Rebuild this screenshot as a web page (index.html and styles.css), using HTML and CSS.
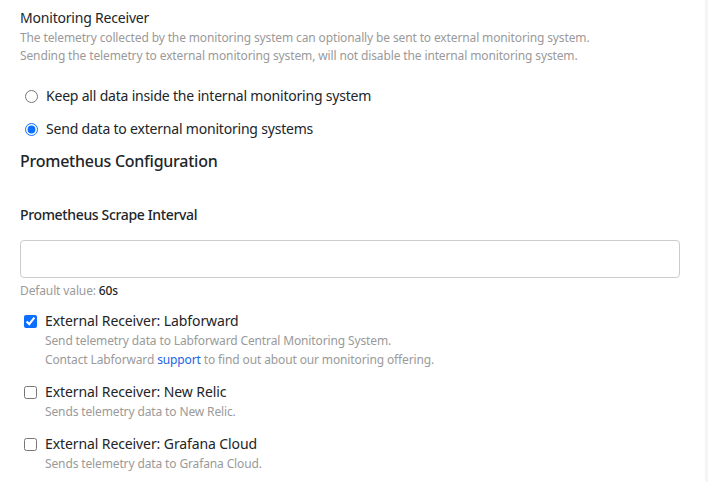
FILE: index.html
```html
<!DOCTYPE html>
<html lang="en">
<head>
<meta charset="utf-8">
<title>Monitoring Receiver</title>
<link rel="stylesheet" href="styles.css">
</head>
<body>
<div class="page">
  <main class="main">
    <section class="receiver">
      <h2 class="title">Monitoring Receiver</h2>
      <p class="desc">The telemetry collected by the monitoring system can optionally be sent to external monitoring system.<br>Sending the telemetry to external monitoring system, will not disable the internal monitoring system.</p>
      <div class="radios">
        <label class="radio-row"><input type="radio" name="mode"> <span>Keep all data inside the internal monitoring system</span></label>
        <label class="radio-row"><input type="radio" name="mode" checked> <span>Send data to external monitoring systems</span></label>
      </div>
    </section>
    <h3 class="heading">Prometheus Configuration</h3>
    <div class="field">
      <label class="field-label" for="scrape">Prometheus Scrape Interval</label>
      <input class="text-input" id="scrape" type="text">
      <div class="hint">Default value: <strong>60s</strong></div>
    </div>
    <div class="checks">
      <div class="check">
        <label class="check-row"><input type="checkbox" checked> <span>External Receiver: Labforward</span></label>
        <p class="check-desc">Send telemetry data to Labforward Central Monitoring System.<br>Contact Labforward <a href="#">support</a> to find out about our monitoring offering.</p>
      </div>
      <div class="check">
        <label class="check-row"><input type="checkbox"> <span>External Receiver: New Relic</span></label>
        <p class="check-desc">Sends telemetry data to New Relic.</p>
      </div>
      <div class="check">
        <label class="check-row"><input type="checkbox"> <span>External Receiver: Grafana Cloud</span></label>
        <p class="check-desc">Sends telemetry data to Grafana Cloud.</p>
      </div>
    </div>
  </main>
  <aside class="edge"></aside>
</div>
</body>
</html>
```

FILE: styles.css
```css
* { box-sizing: border-box; }
html, body { margin: 0; height: 100%; }
body {
  font-family: "Noto Sans", "DejaVu Sans", sans-serif;
  color: #212529;
  background: #fff;
}
.page { display: flex; min-height: 100%; }
.main { flex: 1; padding: 8px 25px 0 20px; }
.edge { width: 3px; background: #f3f6f5; }

.title { margin: 0 0 1px; font-size: 14px; line-height: 20px; font-weight: 400; letter-spacing: -0.2px; }
.desc { margin: 0; font-size: 12px; line-height: 18px; color: #9a9a9a; letter-spacing: -0.13px; }

.radios { display: flex; flex-direction: column; gap: 9px; margin-top: 19px; padding-left: 5px; }
.radio-row { display: flex; align-items: center; gap: 8px; font-size: 14px; line-height: 24px; height: 24px; letter-spacing: -0.2px; }
.radio-row input { margin: 0; width: 13px; height: 13px; accent-color: #0b6efd; }

.heading { margin: 8px 0 0; font-size: 16px; line-height: 24px; font-weight: 500; letter-spacing: -0.25px; }

.field { margin-top: 31px; display: flex; flex-direction: column; }
.field-label { font-size: 14px; line-height: 22px; font-weight: 500; letter-spacing: -0.35px; }
.text-input { margin-top: 14px; height: 38px; width: 100%; border: 1px solid #cccccc; border-radius: 4px; font: inherit; }
.hint { margin-top: 4px; font-size: 12px; line-height: 18px; color: #9a9a9a; letter-spacing: -0.13px; }
.hint strong { color: #212529; font-weight: 500; }

.checks { margin-top: 11px; display: flex; flex-direction: column; gap: 13px; }
.check-row { display: flex; align-items: center; gap: 8px; padding-left: 4px; font-size: 14px; line-height: 20px; letter-spacing: -0.1px; }
.check-row input { margin: 0; width: 13px; height: 13px; accent-color: #0b6efd; }
.check-desc { margin: 0; padding-left: 25px; font-size: 12px; line-height: 19px; color: #9a9a9a; letter-spacing: -0.13px; }
.check-desc a { color: #2262e6; text-decoration: none; }
```
